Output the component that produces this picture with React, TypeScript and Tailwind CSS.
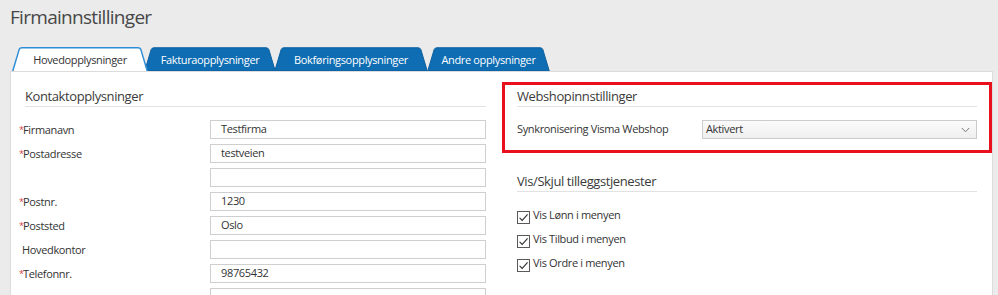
import React from 'react'

const font = "font-['Open_Sans',sans-serif]"
const body = 'text-[11px] tracking-[-0.35px]'

type Tab = { label: string; width: number; active?: boolean; ml: string }

const tabs: Tab[] = [
  { label: 'Hovedopplysninger', width: 136, active: true, ml: 'ml-0' },
  { label: 'Fakturaopplysninger', width: 132, ml: '-ml-[4px]' },
  { label: 'Bokføringsopplysninger', width: 154, ml: '-ml-[2px]' },
  { label: 'Andre opplysninger', width: 123, ml: '-ml-[1px]' },
]

const rows = [
  { label: 'Firmanavn', value: 'Testfirma', required: true },
  { label: 'Postadresse', value: 'testveien', required: true },
  { label: '', value: '', required: false },
  { label: 'Postnr.', value: '1230', required: true },
  { label: 'Poststed', value: 'Oslo', required: true },
  { label: 'Hovedkontor', value: '', required: false },
  { label: 'Telefonnr.', value: '98765432', required: true },
  { label: '', value: '', required: false },
]

const extras = ['Vis Lønn i menyen', 'Vis Tilbud i menyen', 'Vis Ordre i menyen']

function TabShape({ w, active }: { w: number; active?: boolean }) {
  const d = `M0.75,24 L7.2,2.4 Q7.9,0.75 10,0.75 L${w - 10},0.75 Q${w - 7.9},0.75 ${w - 7.2},2.4 L${w - 0.75},24`
  return (
    <svg className="absolute inset-0" width={w} height={24} viewBox={`0 0 ${w} 24`}>
      {active ? (
        <path d={d} fill="#ffffff" stroke="#2f8fd6" strokeWidth="1.5" />
      ) : (
        <path d={d + ' Z'} fill="#0e6db3" stroke="#0b5f9e" strokeWidth="1" />
      )}
    </svg>
  )
}

function SectionHeading({ children }: { children: React.ReactNode }) {
  return (
    <div className="border-b border-[#e2e2e2] text-[13px] leading-[19px] tracking-[-0.4px] text-[#3b3b3b]">
      {children}
    </div>
  )
}

function Checkbox() {
  return (
    <div className="mt-[5px] flex h-[13px] w-[13px] shrink-0 items-center justify-center border border-[#5a5a5a] bg-white">
      <svg width="11" height="11" viewBox="0 0 11 11">
        <path d="M1.6,5.8 L4.2,8.4 L9.6,2.4" fill="none" stroke="#333" strokeWidth="1.1" />
      </svg>
    </div>
  )
}

export default function App() {
  return (
    <div className={`h-[295px] w-[998px] overflow-hidden bg-[#ebebeb] ${font}`}>
      {/* Page title */}
      <div className="px-[10px] pt-[3px] text-[19px] leading-[29px] tracking-[-0.7px] text-[#474747]">
        Firmainnstillinger
      </div>

      {/* Tabs */}
      <div className="mt-[15px] flex h-[24px] pl-[12px]">
        {tabs.map((t) => (
          <div
            key={t.label}
            style={{ width: t.width }}
            className={`relative flex h-[24px] items-center justify-center ${t.ml} ${t.active ? 'z-10' : ''}`}
          >
            <TabShape w={t.width} active={t.active} />
            <span
              className={`relative pt-[1px] leading-[16px] ${body} ${t.active ? 'text-[#333]' : 'text-white'}`}
            >
              {t.label}
            </span>
          </div>
        ))}
      </div>

      {/* Panel */}
      <div className="ml-[10px] flex h-[240px] w-[983px] border border-[#dcdcdc] bg-white">
        {/* Left column */}
        <div className="ml-[14px] w-[461px] pt-[15px]">
          <SectionHeading>Kontaktopplysninger</SectionHeading>
          <div className="mt-[13px] flex flex-col gap-[5px]">
            {rows.map((r, i) => (
              <div key={i} className="flex h-[19px] items-center">
                <div className={`-ml-[6px] flex w-[191px] items-center leading-[16px] text-[#333] ${body}`}>
                  {r.required ? (
                    <span className="w-[4px] text-[9px] leading-[9px] text-[#d0453f]">*</span>
                  ) : (
                    <span className="w-[3px]" />
                  )}
                  <span>{r.label}</span>
                </div>
                <div className={`flex h-[19px] flex-1 items-center border border-[#cfcfcf] bg-white pl-[10px] text-[#333] ${body}`}>
                  {r.value}
                </div>
              </div>
            ))}
          </div>
        </div>

        {/* Right column */}
        <div className="ml-[16px] w-[490px]">
          <div className="mt-[10px] border-[3px] border-[#e8101c] px-[12px] pb-[11px] pt-[2px]">
            <SectionHeading>Webshopinnstillinger</SectionHeading>
            <div className="mt-[13px] flex h-[19px] items-center">
              <div className={`w-[185px] text-[#333] ${body}`}>Synkronisering Visma Webshop</div>
              <div className={`flex h-[19px] flex-1 items-center justify-between border border-[#cccccc] bg-gradient-to-b from-[#fbfbfb] to-[#efefef] pl-[3px] pr-[6px] text-[#333] ${body}`}>
                <span>Aktivert</span>
                <svg width="9" height="6" viewBox="0 0 9 6">
                  <path d="M0.8,1 L4.5,4.8 L8.2,1" fill="none" stroke="#777" strokeWidth="1" />
                </svg>
              </div>
            </div>
          </div>

          <div className="mt-[19px] px-[15px]">
            <SectionHeading>Vis/Skjul tilleggstjenester</SectionHeading>
            <div className="mt-[14px] flex flex-col gap-[6px]">
              {extras.map((e) => (
                <div key={e} className="flex h-[18px] items-start gap-[3px]">
                  <Checkbox />
                  <span className={`leading-[18px] text-[#333] ${body}`}>{e}</span>
                </div>
              ))}
            </div>
          </div>
        </div>
      </div>
    </div>
  )
}
